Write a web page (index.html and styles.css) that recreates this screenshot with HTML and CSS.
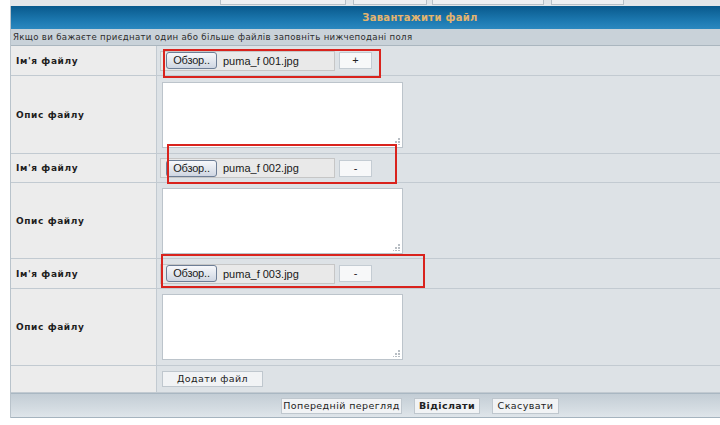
FILE: index.html
```html
<!DOCTYPE html>
<html lang="uk">
<head>
<meta charset="utf-8">
<title>Завантажити файл</title>
<link rel="stylesheet" href="styles.css">
</head>
<body>
<div class="page">
  <div class="topstrip">
    <span class="tab tab-a"></span>
    <span class="tab tab-b"></span>
    <span class="tab tab-c"></span>
    <span class="tab tab-d"></span>
  </div>
  <div class="panel">
    <div class="head">Завантажити файл</div>
    <div class="sub">Якщо ви бажаєте приєднати один або більше файлів заповніть нижчеподані поля</div>

    <div class="row r-name1">
      <div class="lbl">Ім'я файлу</div>
      <div class="val">
        <div class="file"><span class="browse">Обзор..</span><span class="fname">puma_f 001.jpg</span></div>
        <span class="pm">+</span>
      </div>
    </div>
    <div class="row r-desc1">
      <div class="lbl">Опис файлу</div>
      <div class="val"><div class="ta"><svg class="grip" width="7" height="7" viewBox="0 0 7 7"><rect x="5" y="0" width="2" height="2"/><rect x="2" y="3" width="2" height="2"/><rect x="5" y="3" width="2" height="2"/><rect x="-1" y="6" width="2" height="2"/><rect x="2" y="6" width="2" height="2"/><rect x="5" y="6" width="2" height="2"/></svg></div></div>
    </div>

    <div class="row r-name2">
      <div class="lbl">Ім'я файлу</div>
      <div class="val">
        <div class="file"><span class="browse">Обзор..</span><span class="fname">puma_f 002.jpg</span></div>
        <span class="pm">-</span>
      </div>
    </div>
    <div class="row r-desc2">
      <div class="lbl">Опис файлу</div>
      <div class="val"><div class="ta"><svg class="grip" width="7" height="7" viewBox="0 0 7 7"><rect x="5" y="0" width="2" height="2"/><rect x="2" y="3" width="2" height="2"/><rect x="5" y="3" width="2" height="2"/><rect x="-1" y="6" width="2" height="2"/><rect x="2" y="6" width="2" height="2"/><rect x="5" y="6" width="2" height="2"/></svg></div></div>
    </div>

    <div class="row r-name3">
      <div class="lbl">Ім'я файлу</div>
      <div class="val">
        <div class="file"><span class="browse">Обзор..</span><span class="fname">puma_f 003.jpg</span></div>
        <span class="pm">-</span>
      </div>
    </div>
    <div class="row r-desc3">
      <div class="lbl">Опис файлу</div>
      <div class="val"><div class="ta"><svg class="grip" width="7" height="7" viewBox="0 0 7 7"><rect x="5" y="0" width="2" height="2"/><rect x="2" y="3" width="2" height="2"/><rect x="5" y="3" width="2" height="2"/><rect x="-1" y="6" width="2" height="2"/><rect x="2" y="6" width="2" height="2"/><rect x="5" y="6" width="2" height="2"/></svg></div></div>
    </div>

    <div class="row r-add">
      <div class="lbl"></div>
      <div class="val"><span class="btn add">Додати файл</span></div>
    </div>

    <div class="foot">
      <span class="btn fb-preview">Попередній перегляд</span>
      <span class="btn fb-send">Відіслати</span>
      <span class="btn fb-cancel">Скасувати</span>
    </div>
  </div>

  <div class="mark mark-1"></div>
  <div class="mark mark-2"></div>
  <div class="mark mark-3"></div>
</div>
</body>
</html>
```

FILE: styles.css
```css
html, body {
  margin: 0;
  padding: 0;
  background: #ffffff;
  overflow: hidden;
}

.page {
  position: relative;
  width: 720px;
  height: 425px;
  overflow: hidden;
  font-family: "DejaVu Sans", Verdana, sans-serif;
  color: #222;
}

.topstrip {
  margin-left: 10px;
  height: 6px;
  background: #e2e6e9;
  display: flex;
  align-items: flex-start;
}

.tab {
  display: block;
  height: 4px;
  background: #eef0f2;
  border: 1px solid #b7c0c7;
  border-top: none;
}
.tab-a { margin-left: 210px; width: 124px; }
.tab-b { margin-left: 7px; width: 72px; }
.tab-c { margin-left: 5px; width: 110px; }
.tab-d { margin-left: 7px; width: 71px; }

.panel {
  margin-left: 10px;
  width: 818px;
  border-left: 1px solid #b9c3cb;
}

.head {
  height: 23px;
  line-height: 23px;
  background: linear-gradient(#08598c, #1f7cb4 70%, #2b88bf);
  color: #e3b46e;
  font-weight: bold;
  font-size: 10px;
  text-align: center;
  letter-spacing: 0.3px;
}

.sub {
  height: 16px;
  line-height: 16px;
  background: #c9d2d9;
  border-bottom: 1px solid #aab6bf;
  font-size: 8.6px;
  letter-spacing: 0.32px;
  color: #2c2c2c;
  padding-left: 2px;
  white-space: nowrap;
}

.row {
  display: grid;
  grid-template-columns: 146px 1fr;
  border-bottom: 1px solid #c2cad1;
}
.r-name1 { height: 29px; }
.r-desc1 { height: 77px; }
.r-name2 { height: 28px; }
.r-desc2 { height: 75px; }
.r-name3 { height: 29px; }
.r-desc3 { height: 76px; }
.r-add { height: 26px; }

.lbl {
  background: #ececec;
  border-right: 1px solid #c2cad1;
  display: flex;
  align-items: center;
  padding-left: 5px;
  font-size: 9px;
  font-weight: bold;
  letter-spacing: 0.6px;
  color: #1e1e1e;
}

.val {
  background: #dde2e6;
  display: flex;
  align-items: center;
}

.file {
  margin-left: 3px;
  width: 173px;
  height: 18px;
  background: #e9e9e9;
  border: 1px solid #c6c6c6;
  display: flex;
  align-items: center;
  font-family: "Liberation Sans", Arial, sans-serif;
  font-size: 11px;
}

.browse {
  margin-left: 5px;
  width: 49px;
  height: 15px;
  line-height: 15px;
  text-align: center;
  border: 1px solid #6d7e96;
  border-radius: 3px;
  background: linear-gradient(#f7f8fb, #dfe4ec 60%, #cfd6e2);
  color: #1a1a1a;
  font-size: 11px;
  letter-spacing: -0.2px;
}

.fname {
  margin-left: 6px;
  color: #1a1a1a;
}

.pm {
  margin-left: 4px;
  width: 31px;
  height: 15px;
  line-height: 14px;
  text-align: center;
  background: #f7f8f9;
  border: 1px solid #c4ccd3;
  font-family: "Liberation Sans", Arial, sans-serif;
  font-size: 11px;
  color: #222;
}

.ta {
  position: relative;
  margin-left: 5px;
  width: 239px;
  height: 64px;
  background: #ffffff;
  border: 1px solid #bcc4cb;
}

.grip {
  position: absolute;
  right: 2px;
  bottom: 2px;
  fill: #b8bec4;
}

.btn {
  display: inline-block;
  box-sizing: border-box;
  height: 16px;
  line-height: 14px;
  text-align: center;
  background: #f1f3f5;
  border: 1px solid #bfc7ce;
  font-size: 9.5px;
  letter-spacing: 0.4px;
  color: #222;
}

.add {
  margin-left: 5px;
  width: 101px;
}

.foot {
  height: 23px;
  border-top: 1px solid #a9b7c2;
  border-bottom: 1px solid #a5b3be;
  background: linear-gradient(#c3cdd5, #d3dbe1 60%, #dfe5ea);
  display: flex;
  align-items: center;
  justify-content: center;
  gap: 12px;
}

.fb-preview { width: 121px; }
.fb-send { width: 66px; font-weight: bold; }
.fb-cancel { width: 67px; }

.mark {
  position: absolute;
  border: 2px solid #d9231d;
  box-sizing: border-box;
}
.mark-1 { left: 163px; top: 49px; width: 218px; height: 29px; }
.mark-2 { left: 167px; top: 144px; width: 230px; height: 40px; }
.mark-3 { left: 161px; top: 254px; width: 264px; height: 34px; }
```
